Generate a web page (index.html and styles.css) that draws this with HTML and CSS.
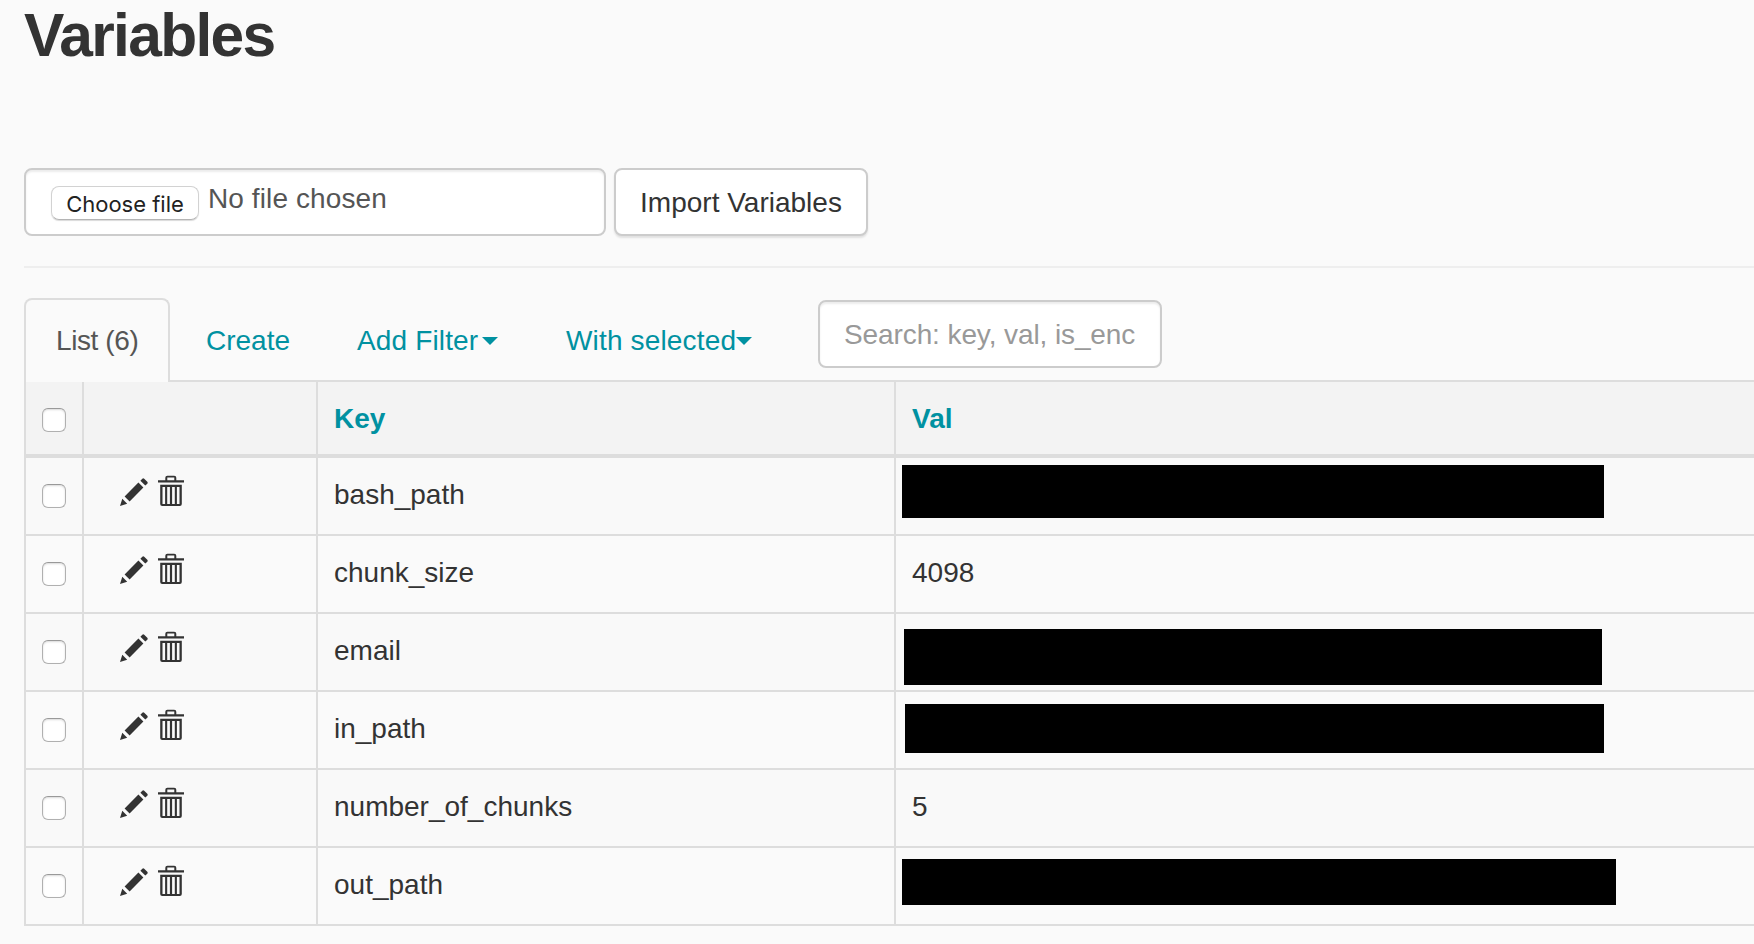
FILE: index.html
```html
<!DOCTYPE html>
<html lang="en">
<head>
<meta charset="utf-8">
<title>Variables</title>
<link rel="stylesheet" href="styles.css">
</head>
<body>
<svg class="defs" width="0" height="0" aria-hidden="true">
  <symbol id="pencil" viewBox="0 0 28 28">
    <path d="M0 28 2.3 20.8 7.2 25.7Z M4.6 18.4 18.4 4.6 23.4 9.6 9.6 23.4Z M20.4 2.7 22.3.8Q23.2-.1 24.2.7L27.3 3.8Q28.1 4.8 27.3 5.7L25.3 7.6Z"/>
  </symbol>
  <symbol id="trash" viewBox="0 0 26 31">
    <path fill-rule="evenodd" d="M0 5.2H7.3V2.8Q7.3.7 9.4.7H16.2Q18.3.7 18.3 2.8V5.2H26V7.4H0Z M9.3 5.2H16.3V2.6H9.3Z M2.2 9.8H23.8V29Q23.8 31 21.8 31H4.2Q2.2 31 2.2 29Z M4.5 11.9V28.9H7.1V11.9Z M9.2 11.9V28.9H11.9V11.9Z M14.1 11.9V28.9H16.8V11.9Z M18.9 11.9V28.9H21.5V11.9Z"/>
  </symbol>
</svg>
<main class="page">
  <h1 class="title">Variables</h1>
  <form class="import">
    <div class="file-box"><span class="file-button">Choose file</span><span class="file-name">No file chosen</span></div>
    <button class="import-button" type="button">Import Variables</button>
  </form>
  <hr class="rule">
  <nav class="tabs">
    <a class="tab tab-active">List (6)</a>
    <a class="tab tab-create">Create</a>
    <a class="tab tab-filter">Add Filter<i class="caret"></i></a>
    <a class="tab tab-selected">With selected<i class="caret"></i></a>
    <input class="search" type="text" placeholder="Search: key, val, is_enc">
  </nav>
  <table class="list">
    <colgroup><col class="col-check"><col class="col-actions"><col class="col-key"><col></colgroup>
    <thead>
      <tr><th><span class="check"></span></th><th></th><th>Key</th><th>Val</th></tr>
    </thead>
    <tbody>
      <tr><td><span class="check"></span></td><td><div class="actions"><svg class="pencil"><use href="#pencil"/></svg><svg class="trash"><use href="#trash"/></svg></div></td><td>bash_path</td><td class="masked"><div class="mask mask-bash"></div></td></tr>
      <tr><td><span class="check"></span></td><td><div class="actions"><svg class="pencil"><use href="#pencil"/></svg><svg class="trash"><use href="#trash"/></svg></div></td><td>chunk_size</td><td>4098</td></tr>
      <tr><td><span class="check"></span></td><td><div class="actions"><svg class="pencil"><use href="#pencil"/></svg><svg class="trash"><use href="#trash"/></svg></div></td><td>email</td><td class="masked"><div class="mask mask-email"></div></td></tr>
      <tr><td><span class="check"></span></td><td><div class="actions"><svg class="pencil"><use href="#pencil"/></svg><svg class="trash"><use href="#trash"/></svg></div></td><td>in_path</td><td class="masked"><div class="mask mask-in"></div></td></tr>
      <tr><td><span class="check"></span></td><td><div class="actions"><svg class="pencil"><use href="#pencil"/></svg><svg class="trash"><use href="#trash"/></svg></div></td><td>number_of_chunks</td><td>5</td></tr>
      <tr><td><span class="check"></span></td><td><div class="actions"><svg class="pencil"><use href="#pencil"/></svg><svg class="trash"><use href="#trash"/></svg></div></td><td>out_path</td><td class="masked"><div class="mask mask-out"></div></td></tr>
    </tbody>
  </table>
</main>
</body>
</html>
```
FILE: styles.css
```css
* { box-sizing: border-box; }
body {
  margin: 0;
  background: #fafafa;
  color: #333;
  font: 28px/40px "Liberation Sans", Arial, sans-serif;
  overflow: hidden;
}
.defs { position: absolute; }
.page { padding-left: 24px; }
.title {
  margin: 0;
  height: 168px;
  font-size: 60.5px;
  line-height: 70px;
  letter-spacing: -1.7px;
}
.import { display: flex; gap: 8px; height: 98px; }
.file-box, .import-button, .search {
  height: 68px;
  border: 2px solid #ccc;
  border-radius: 8px;
  background: #fff;
  font: inherit;
}
.file-box {
  display: flex;
  width: 582px;
  padding: 16px 25px;
  box-shadow: inset 0 2px 2px rgba(0, 0, 0, .075);
}
.file-button {
  width: 148px;
  height: 34px;
  border: 1px solid #d2d2d2;
  border-bottom-color: #b4b4b4;
  border-radius: 8px;
  box-shadow: 0 1px 1px rgba(0, 0, 0, .15);
  color: #222;
  font: 22px/34px Inter, sans-serif;
  text-align: center;
}
.file-name {
  margin-left: 9px;
  color: #555;
  line-height: 26px;
  letter-spacing: .1px;
}
.import-button {
  width: 254px;
  padding: 2px 0 0;
  color: #333;
  box-shadow: 0 2px 2px rgba(0, 0, 0, .1);
}
.rule { height: 2px; margin: 0; border: 0; background: #eee; }
.tabs {
  display: flex;
  height: 114px;
  padding-top: 30px;
  border-bottom: 2px solid #ddd;
  color: #0091a1;
}
.tab {
  display: flex;
  align-items: center;
  height: 82px;
  padding-top: 4px;
  white-space: nowrap;
}
.tab-active {
  width: 146px;
  height: 84px;
  padding: 0 0 0 30px;
  border: 2px solid #ddd;
  border-bottom: 0;
  border-radius: 8px 8px 0 0;
  background: #fafafa;
  color: #555;
  letter-spacing: -.4px;
}
.tab-create { width: 151px; padding-left: 36px; }
.tab-filter { width: 210px; padding-left: 36px; letter-spacing: .15px; }
.tab-selected { width: 287px; padding-left: 35px; letter-spacing: .16px; }
.caret {
  border: 8px solid transparent;
  border-top-color: #0091a1;
  border-bottom: 0;
}
.tab-filter .caret { margin-left: 4px; }
.search {
  width: 344px;
  margin-top: 2px;
  padding: 2px 25px 0 24px;
  box-shadow: inset 0 2px 2px rgba(0, 0, 0, .075);
  letter-spacing: -.1px;
}
.search::placeholder { color: #999; opacity: 1; }
.list {
  width: 1740px;
  table-layout: fixed;
  border-left: 2px solid #ddd;
  border-spacing: 0;
}
.col-check { width: 58px; }
.col-actions { width: 234px; }
.col-key { width: 578px; }
.list th, .list td {
  height: 78px;
  padding: 16px;
  border-right: 2px solid #ddd;
  border-bottom: 2px solid #ddd;
  line-height: 42px;
  text-align: left;
  vertical-align: top;
}
.list th {
  height: 76px;
  padding-bottom: 8px;
  border-bottom-width: 4px;
  background: #f3f3f3;
  color: #0091a1;
}
.list tbody tr:nth-child(odd) { background: #f9f9f9; }
.check {
  display: block;
  width: 24px;
  height: 24px;
  margin-top: 10px;
  border: 1px solid #b0b0b0;
  border-top-color: #999;
  border-radius: 6px;
  background: #fff;
  box-shadow: inset 0 1px 2px rgba(0, 0, 0, .15);
}
.actions {
  display: flex;
  gap: 10px;
  padding-left: 20px;
  fill: #333;
}
.pencil { width: 28px; height: 28px; margin-top: 4px; }
.trash { width: 26px; height: 31px; margin-top: 1px; }
.list .masked { padding: 0 0 0 6px; }
.mask { background: #000; }
.mask-bash { width: 702px; height: 53px; margin-top: 7px; }
.mask-email { width: 698px; height: 56px; margin: 15px 0 0 2px; }
.mask-in { width: 699px; height: 49px; margin: 12px 0 0 3px; }
.mask-out { width: 714px; height: 46px; margin-top: 11px; }
```
